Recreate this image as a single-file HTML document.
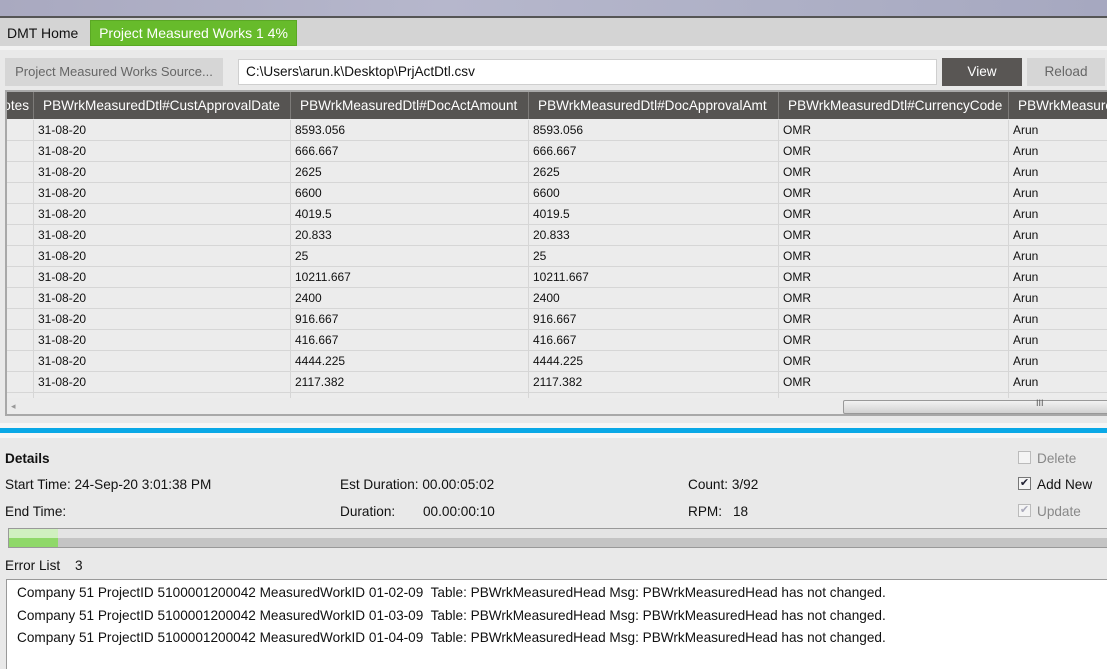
<!DOCTYPE html>
<html><head><meta charset="utf-8"><style>
*{margin:0;padding:0;box-sizing:border-box}
body{width:1107px;height:669px;overflow:hidden;background:#e9e9e9;font-family:"Liberation Sans",sans-serif;font-size:13.6px;color:#111;position:relative}
.a{position:absolute;white-space:nowrap}
.top{left:0;top:0;width:1107px;height:17px;background:linear-gradient(90deg,#a9a9c0,#b6b7cc 40%,#aeb0c6 70%,#a6a8c0)}
.tl{left:0;top:16px;width:1107px;height:2px;background:#555}
.tabbar{left:0;top:18px;width:1107px;height:28px;background:#d4d4d4}
.grid{left:5px;top:90px;width:1102px;height:326px;border:2px solid #a8a8a8;border-right:none;background:#ececec;overflow:hidden}
.hdr{position:absolute;top:0;height:27px;background:#565452;color:#fff;line-height:27px;padding-left:9px;border-left:1px solid #7d7b79;overflow:hidden}
.row{position:absolute;left:0;width:1102px;height:21px;border-bottom:1px solid #d6d6d6;font-size:12px;line-height:20px}
.c{position:absolute;top:0;height:21px;border-left:1px solid #d6d6d6;padding-left:4px}
.cb{width:13px;height:13px;border:1px solid #999;background:#f4f4f4}
.err{position:absolute;left:17px;font-size:13.6px}
</style></head><body>
<div class="a top"></div><div class="a tl"></div>
<div class="a tabbar"></div>
<div class="a" style="left:7px;top:25px;font-size:14px">DMT Home</div>
<div class="a" style="left:90px;top:20px;width:207px;height:26px;background:#67bb2b;border:1px solid #5aa824;color:#fff;line-height:24px;text-align:center;font-size:14px">Project Measured Works 1 4%</div>
<div class="a" style="left:0;top:46px;width:1107px;height:4px;background:#f2f2f2"></div>
<div class="a" style="left:5px;top:58px;width:218px;height:28px;background:#d6d6d6;color:#666;line-height:28px;text-align:center;font-size:13px">Project Measured Works Source...</div>
<div class="a" style="left:238px;top:59px;width:699px;height:26px;background:#fff;border:1px solid #cfcfcf;line-height:24px;padding-left:7px">C:\Users\arun.k\Desktop\PrjActDtl.csv</div>
<div class="a" style="left:942px;top:58px;width:80px;height:28px;background:#595654;color:#fff;line-height:28px;text-align:center">View</div>
<div class="a" style="left:1027px;top:58px;width:78px;height:28px;background:#d6d6d6;color:#666;line-height:28px;text-align:center">Reload</div>
<div class="a grid">
<div class="hdr" style="left:-40px;width:66px;text-align:right;padding-right:4px;border:none">Notes</div>
<div class="hdr" style="left:26px;width:257px">PBWrkMeasuredDtl#CustApprovalDate</div>
<div class="hdr" style="left:283px;width:238px">PBWrkMeasuredDtl#DocActAmount</div>
<div class="hdr" style="left:521px;width:250px">PBWrkMeasuredDtl#DocApprovalAmt</div>
<div class="hdr" style="left:771px;width:230px">PBWrkMeasuredDtl#CurrencyCode</div>
<div class="hdr" style="left:1001px;width:110px">PBWrkMeasuredDtl#ChangedBy</div>
<div id="rows"></div>
<div style="position:absolute;left:0;top:306px;width:1102px;height:20px;background:#ebebeb"></div>
<div style="position:absolute;left:4px;top:309px;color:#999;font-size:9px">◂</div>
<div style="position:absolute;left:836px;top:308px;width:270px;height:14px;border:1px solid #999;border-radius:2px;background:linear-gradient(#f2f2f2,#d2d2d2)"><span style="position:absolute;left:192px;top:-3px;font-size:9px;color:#555">III</span></div>
</div>
<div class="a" style="left:0;top:423px;width:1107px;height:5px;background:#f6f6f6"></div>
<div class="a" style="left:0;top:428px;width:1107px;height:5px;background:#0aa8e6"></div>
<div class="a" style="left:0;top:433px;width:1107px;height:5px;background:#f6f6f6"></div>
<div class="a" style="left:5px;top:451px;font-weight:bold">Details</div>
<div class="a" style="left:5px;top:477px">Start Time: 24-Sep-20 3:01:38 PM</div>
<div class="a" style="left:5px;top:504px">End Time:</div>
<div class="a" style="left:340px;top:477px">Est Duration: 00.00:05:02</div>
<div class="a" style="left:340px;top:504px">Duration:</div>
<div class="a" style="left:423px;top:504px">00.00:00:10</div>
<div class="a" style="left:688px;top:477px">Count: 3/92</div>
<div class="a" style="left:688px;top:504px">RPM:</div>
<div class="a" style="left:733px;top:504px">18</div>
<div class="a cb" style="left:1018px;top:451px;border-color:#bbb"></div>
<div class="a" style="left:1037px;top:451px;color:#888">Delete</div>
<div class="a cb" style="left:1018px;top:477px;border-color:#777;font-size:11px;line-height:11px;text-align:center;color:#223">✔</div>
<div class="a" style="left:1037px;top:477px">Add New</div>
<div class="a cb" style="left:1018px;top:504px;border-color:#bbb;font-size:11px;line-height:11px;text-align:center;color:#aab">✔</div>
<div class="a" style="left:1037px;top:504px;color:#888">Update</div>
<div class="a" style="left:8px;top:528px;width:1100px;height:20px;border:1px solid #999;border-right:none;background:linear-gradient(#e4e4e4 50%,#c4c4c4 50%)"></div>
<div class="a" style="left:9px;top:529px;width:49px;height:18px;background:linear-gradient(#d0f0c0 50%,#8fd869 50%)"></div>
<div class="a" style="left:5px;top:558px">Error List</div>
<div class="a" style="left:75px;top:558px">3</div>
<div class="a" style="left:6px;top:579px;width:1101px;height:90px;background:#fff;border:1px solid #999;border-right:none;border-bottom:none"></div>
<div class="a err" style="top:585px">Company 51 ProjectID 5100001200042 MeasuredWorkID 01-02-09&nbsp; Table: PBWrkMeasuredHead Msg: PBWrkMeasuredHead has not changed.</div>
<div class="a err" style="top:608px">Company 51 ProjectID 5100001200042 MeasuredWorkID 01-03-09&nbsp; Table: PBWrkMeasuredHead Msg: PBWrkMeasuredHead has not changed.</div>
<div class="a err" style="top:630px">Company 51 ProjectID 5100001200042 MeasuredWorkID 01-04-09&nbsp; Table: PBWrkMeasuredHead Msg: PBWrkMeasuredHead has not changed.</div>
<script>
var v=["8593.056","666.667","2625","6600","4019.5","20.833","25","10211.667","2400","916.667","416.667","4444.225","2117.382",""];
var h="";
for(var i=0;i<v.length;i++){var t=28+i*21;var d=v[i]?"31-08-20":"",o=v[i]?"OMR":"",a=v[i]?"Arun":"";
h+='<div class="row" style="top:'+t+'px"><div class="c" style="left:26px;width:257px">'+d+'</div><div class="c" style="left:283px;width:238px">'+v[i]+'</div><div class="c" style="left:521px;width:250px">'+v[i]+'</div><div class="c" style="left:771px;width:230px">'+o+'</div><div class="c" style="left:1001px;width:110px">'+a+'</div></div>';}
document.getElementById("rows").innerHTML=h;
</script>
</body></html>
